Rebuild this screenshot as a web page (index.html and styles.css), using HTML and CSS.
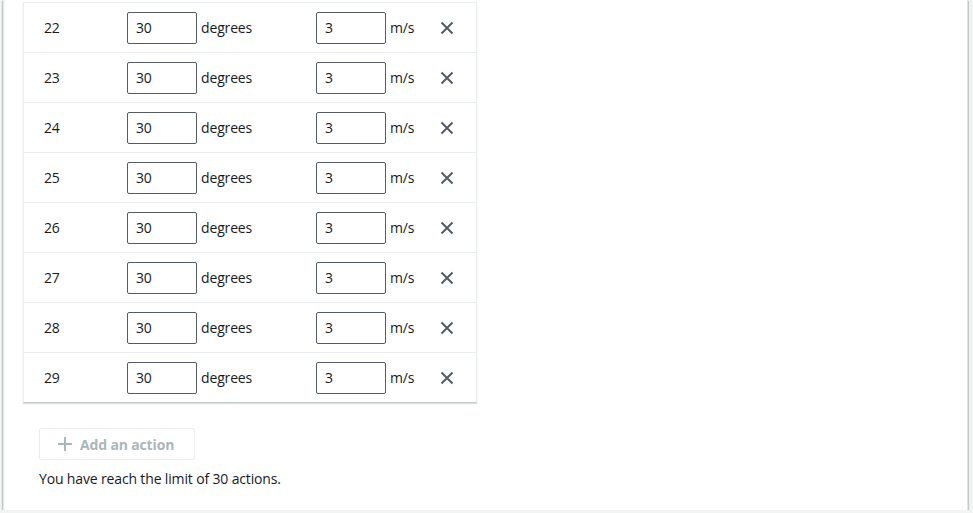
FILE: index.html
```html
<!DOCTYPE html>
<html>
<head>
<meta charset="utf-8">
<link rel="stylesheet" href="styles.css">
</head>
<body>
<div class="panel">
  <div class="table">
    <div class="row"><span class="num">22</span><input class="field" value="30"><span class="unit deg">degrees</span><input class="field" value="3"><span class="unit ms">m/s</span><span class="remove"><svg viewBox="0 0 16 16" width="16" height="16"><path d="M2.5 2.5l11 11M13.5 2.5l-11 11"/></svg></span></div>
    <div class="row"><span class="num">23</span><input class="field" value="30"><span class="unit deg">degrees</span><input class="field" value="3"><span class="unit ms">m/s</span><span class="remove"><svg viewBox="0 0 16 16" width="16" height="16"><path d="M2.5 2.5l11 11M13.5 2.5l-11 11"/></svg></span></div>
    <div class="row"><span class="num">24</span><input class="field" value="30"><span class="unit deg">degrees</span><input class="field" value="3"><span class="unit ms">m/s</span><span class="remove"><svg viewBox="0 0 16 16" width="16" height="16"><path d="M2.5 2.5l11 11M13.5 2.5l-11 11"/></svg></span></div>
    <div class="row"><span class="num">25</span><input class="field" value="30"><span class="unit deg">degrees</span><input class="field" value="3"><span class="unit ms">m/s</span><span class="remove"><svg viewBox="0 0 16 16" width="16" height="16"><path d="M2.5 2.5l11 11M13.5 2.5l-11 11"/></svg></span></div>
    <div class="row"><span class="num">26</span><input class="field" value="30"><span class="unit deg">degrees</span><input class="field" value="3"><span class="unit ms">m/s</span><span class="remove"><svg viewBox="0 0 16 16" width="16" height="16"><path d="M2.5 2.5l11 11M13.5 2.5l-11 11"/></svg></span></div>
    <div class="row"><span class="num">27</span><input class="field" value="30"><span class="unit deg">degrees</span><input class="field" value="3"><span class="unit ms">m/s</span><span class="remove"><svg viewBox="0 0 16 16" width="16" height="16"><path d="M2.5 2.5l11 11M13.5 2.5l-11 11"/></svg></span></div>
    <div class="row"><span class="num">28</span><input class="field" value="30"><span class="unit deg">degrees</span><input class="field" value="3"><span class="unit ms">m/s</span><span class="remove"><svg viewBox="0 0 16 16" width="16" height="16"><path d="M2.5 2.5l11 11M13.5 2.5l-11 11"/></svg></span></div>
    <div class="row"><span class="num">29</span><input class="field" value="30"><span class="unit deg">degrees</span><input class="field" value="3"><span class="unit ms">m/s</span><span class="remove"><svg viewBox="0 0 16 16" width="16" height="16"><path d="M2.5 2.5l11 11M13.5 2.5l-11 11"/></svg></span></div>
  </div>
  <div class="footer">
    <button class="add" disabled><svg viewBox="0 0 16 16" width="16" height="16"><path d="M8 1v14M1 8h14"/></svg><span>Add an action</span></button>
    <p class="limit">You have reach the limit of 30 actions.</p>
  </div>
</div>
</body>
</html>
```
FILE: styles.css
```css
html, body {
  margin: 0;
  padding: 0;
  background: #f2f3f3;
  font-family: "Open Sans", "Noto Sans", Arial, sans-serif;
  font-size: 14px;
  letter-spacing: -0.15px;
  color: #16191f;
}

.panel {
  margin: 0 5px 0 3px;
  background: #fff;
  border-left: 1px solid #e1e4e4;
  border-right: 1px solid #e1e4e4;
  height: 510px;
  box-sizing: border-box;
  padding: 2px 0 0 19px;
  box-shadow: 0 1px 1px 0 rgba(0, 28, 36, 0.3), 1px 1px 1px 0 rgba(0, 28, 36, 0.15), -1px 1px 1px 0 rgba(0, 28, 36, 0.15);
}

.table {
  width: 454px;
  box-sizing: border-box;
  border-left: 1px solid #eaeded;
  border-right: 1px solid #eaeded;
  border-bottom: 1px solid #c6cccc;
  box-shadow: 0 1px 1px 0 rgba(0, 28, 36, 0.15);
}

.row {
  display: flex;
  align-items: center;
  height: 50px;
  box-sizing: border-box;
  border-top: 1px solid #eaeded;
  padding-left: 20px;
}

.num {
  width: 83px;
}

.field {
  width: 70px;
  height: 32px;
  box-sizing: border-box;
  border: 1px solid #545b64;
  border-radius: 2px;
  padding: 0 8px;
  font-family: inherit;
  font-size: 14px;
  letter-spacing: -0.15px;
  color: #16191f;
  background: #fff;
  margin: 0;
}

.unit {
  margin-left: 4px;
}

.deg {
  width: 115px;
}

.ms {
  width: 37px;
}

.remove {
  display: flex;
  width: 16px;
  height: 16px;
  margin-left: 12px;
}

.remove svg path {
  stroke: #545b64;
  stroke-width: 2;
  fill: none;
}

.footer {
  padding: 25px 0 0 16px;
}

.add {
  display: flex;
  align-items: center;
  gap: 7px;
  height: 32px;
  width: 156px;
  box-sizing: border-box;
  padding: 0 0 0 17px;
  border: 1px solid #eaeded;
  border-radius: 2px;
  background: #fff;
  font-family: inherit;
  font-size: 14px;
  letter-spacing: -0.15px;
  font-weight: 700;
  color: #aab7b8;
  white-space: nowrap;
  margin: 0;
}

.add svg path {
  stroke: #aab7b8;
  stroke-width: 2;
  fill: none;
}

.limit {
  margin: 9px 0 0;
  line-height: 20px;
}
```
